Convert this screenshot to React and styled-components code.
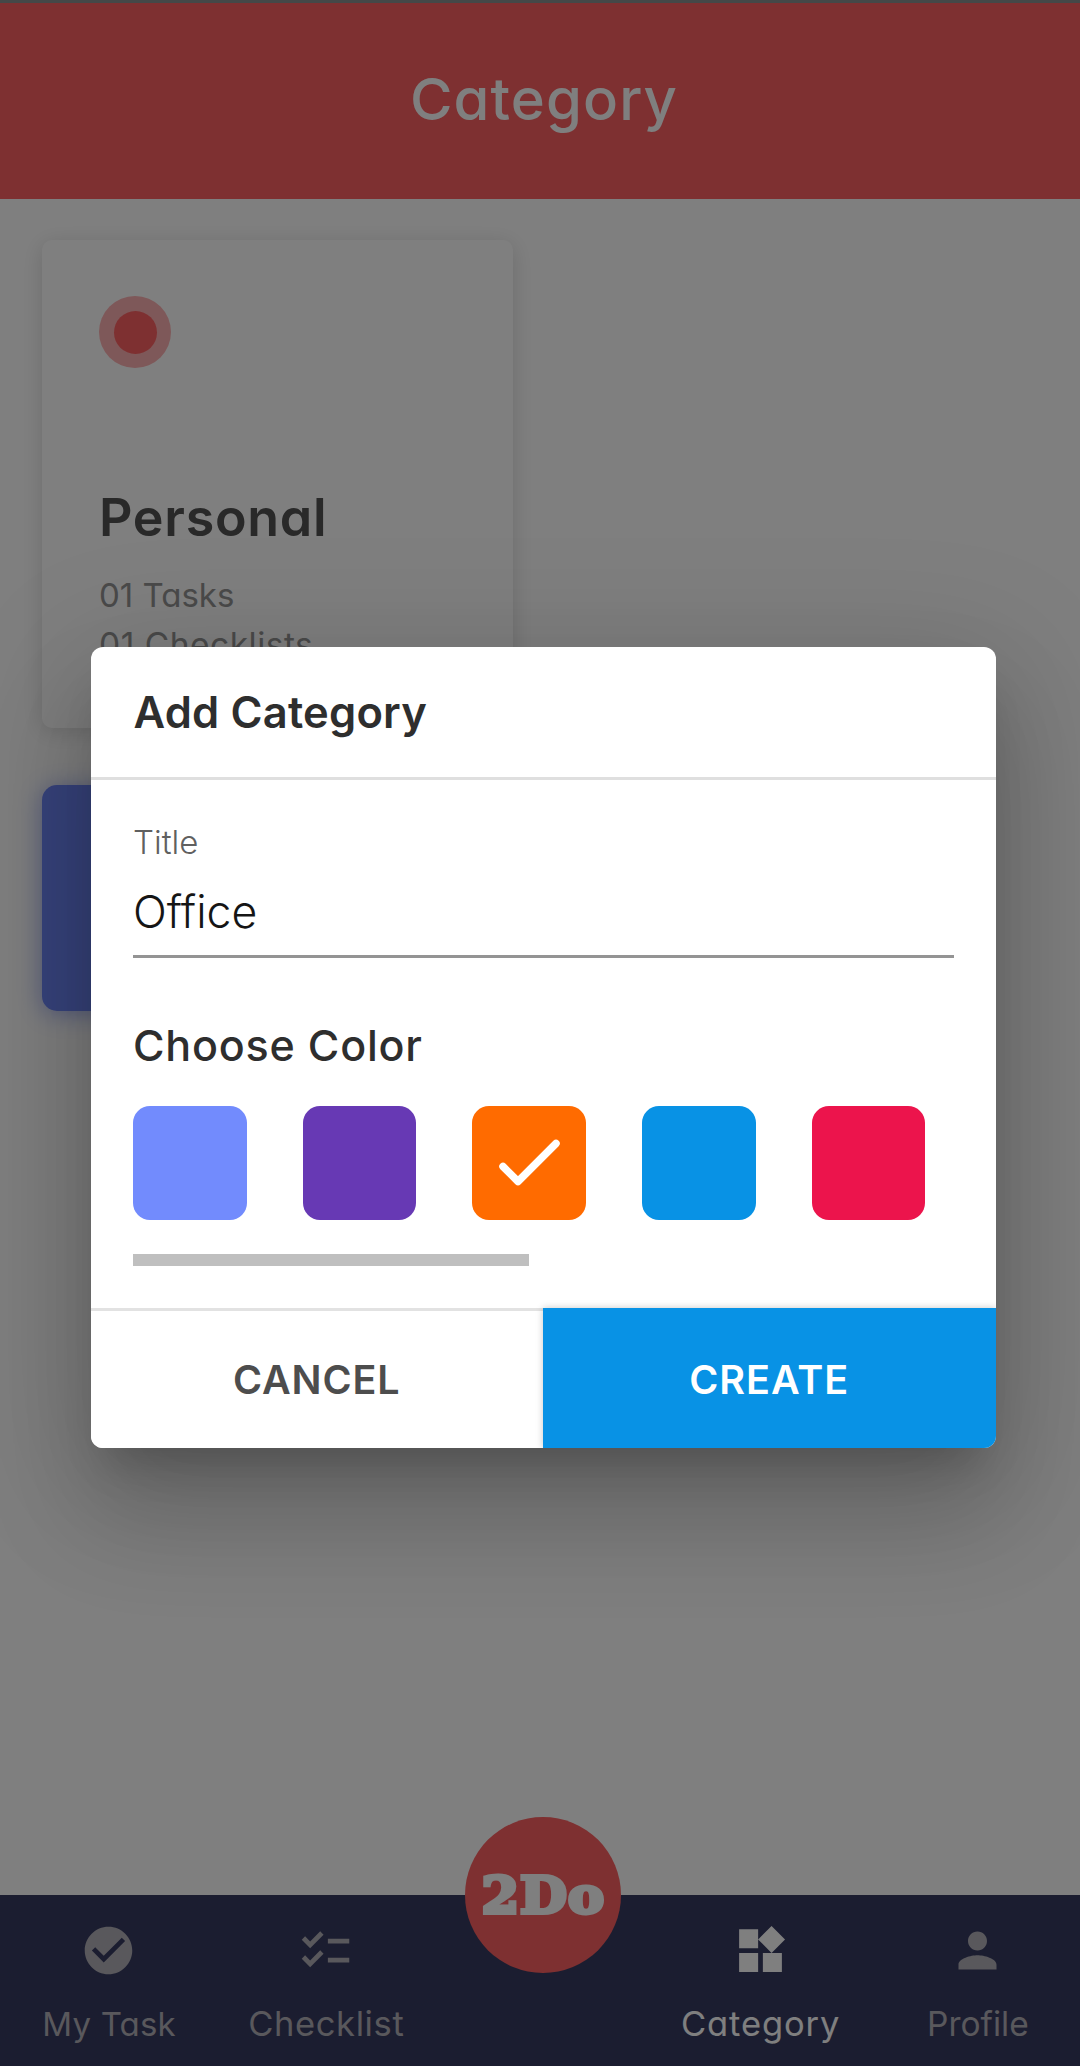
import React from "react";
import styled, { createGlobalStyle } from "styled-components";
import { MdCheckCircle, MdChecklist, MdWidgets, MdPerson } from "react-icons/md";

const GlobalStyle = createGlobalStyle`
  * { box-sizing: border-box; }
  html, body { margin: 0; padding: 0; overflow: hidden; background: #fff; }
  body { font-family: Inter, "Liberation Sans", sans-serif; }
`;

const Viewport = styled.div`
  width: 1080px;
  height: 2066px;
  overflow: hidden;
`;

const Screen = styled.div`
  position: relative;
  display: flex;
  flex-direction: column;
  width: 1086px;
  height: 2066px;
  background: #fff;
`;

/* Rounded, single-storey letter shapes */
const Geometric = styled.span`
  font-feature-settings: "cv11" 1;
  white-space: nowrap;
`;

const StatusStrip = styled.div`
  height: 3px;
  background: #8a9090;
`;

const Header = styled.header`
  display: flex;
  align-items: center;
  justify-content: center;
  height: 196px;
  padding: 0 0 5px 2px;
  background: #fc6062;
`;

const HeaderTitle = styled(Geometric)`
  font-size: 58px;
  font-weight: 500;
  line-height: 80px;
  letter-spacing: 1.1px;
  color: #fff;
`;

const Content = styled.main`
  display: flex;
  flex-direction: column;
  align-items: flex-start;
  flex: 1;
  gap: 57px;
  padding: 41px 42px 0;
`;

const Card = styled.section`
  display: flex;
  flex-direction: column;
  align-items: flex-start;
  width: 471px;
  height: 488px;
  padding: 56px 57px 0 57px;
  border-radius: 10px;
  background: #fff;
  box-shadow: 0 4px 22px rgba(0, 0, 0, 0.15);
`;

const Dot = styled.div`
  display: flex;
  align-items: center;
  justify-content: center;
  width: 72px;
  height: 72px;
  border-radius: 50%;
  background: #fdb0b2;

  &::after {
    content: "";
    width: 43px;
    height: 43px;
    border-radius: 50%;
    background: #fc6062;
  }
`;

const CardTitle = styled(Geometric)`
  margin: 120px 0 22px;
  font-size: 52px;
  font-weight: 620;
  line-height: 60px;
  letter-spacing: 0.7px;
  color: #525252;
`;

const CardLine = styled(Geometric)`
  font-size: ${(p) => p.$size};
  line-height: 50px;
  letter-spacing: ${(p) => p.$spacing};
  color: #949494;
`;

const AddTile = styled.div`
  width: 471px;
  height: 226px;
  border-radius: 15px;
  background: #6f86f8;
  box-shadow: 0 3px 24px rgba(70, 100, 240, 0.5);
`;

const NavBar = styled.nav`
  position: relative;
  display: grid;
  grid-template-columns: repeat(5, 217.2px);
  height: 171px;
  background: #373b61;
`;

const NavItem = styled.div`
  display: flex;
  flex-direction: column;
  align-items: center;
  padding-top: 27px;
  color: ${(p) => (p.$active ? "#ffffff" : "#b2b0b8")};

  svg {
    width: 57px;
    height: 57px;
  }
`;

const NavLabel = styled(Geometric)`
  margin-top: 20px;
  padding-left: 1px;
  font-size: ${(p) => p.$size};
  font-weight: 380;
  line-height: 50px;
  letter-spacing: ${(p) => p.$spacing};
`;

const Fab = styled.div`
  position: absolute;
  left: 465px;
  top: -78px;
  display: flex;
  align-items: center;
  justify-content: center;
  width: 156px;
  height: 156px;
  border-radius: 50%;
  background: #fc6062;
`;

const Logo = styled.span`
  padding-top: 2px;
  font-family: "DejaVu Serif", serif;
  font-size: 50px;
  font-weight: 700;
  line-height: 60px;
  letter-spacing: 1px;
  color: #fff;
  -webkit-text-stroke: 4px #fff;
  transform: scaleX(1.08);
`;

const Overlay = styled.div`
  position: absolute;
  inset: 0;
  display: flex;
  align-items: flex-start;
  justify-content: center;
  padding-top: 647px;
  background: rgba(0, 0, 0, 0.5);
`;

const Dialog = styled.div`
  display: flex;
  flex-direction: column;
  width: 905px;
  height: 801px;
  border-radius: 12px;
  overflow: hidden;
  background: #fff;
  box-shadow: 0 30px 41px -19px rgba(0, 0, 0, 0.2),
    0 66px 105px 8px rgba(0, 0, 0, 0.14),
    0 25px 127px 22px rgba(0, 0, 0, 0.12);
`;

const DialogHeader = styled.div`
  display: flex;
  align-items: center;
  height: 133px;
  padding: 0 43px 1px;
  border-bottom: 3px solid #dfdfdf;
`;

const DialogTitle = styled.span`
  font-size: 43.5px;
  font-weight: 580;
  line-height: 60px;
  letter-spacing: 0.2px;
  white-space: nowrap;
  color: #2e2e2e;
`;

const DialogBody = styled.div`
  display: flex;
  flex-direction: column;
  flex: 1;
  padding: 42px 42px 0 42.5px;
`;

const FieldLabel = styled.label`
  font-size: 33px;
  font-weight: 300;
  line-height: 40px;
  color: #606060;
`;

const FieldValue = styled.div`
  height: 96px;
  font-size: 44.5px;
  font-weight: 300;
  line-height: 100px;
  color: #151515;
  border-bottom: 3px solid #949494;
`;

const SectionTitle = styled(Geometric)`
  margin: 57px 0 31px;
  font-size: 43px;
  font-weight: 500;
  line-height: 60px;
  letter-spacing: 0.8px;
  color: #2e2e2e;
`;

const Swatches = styled.div`
  display: flex;
  gap: 56.2px;
`;

const Swatch = styled.div`
  display: flex;
  align-items: center;
  justify-content: center;
  flex: 0 0 113.5px;
  height: 113.5px;
  border-radius: 17px;
  background: ${(p) => p.$color};
`;

const ScrollThumb = styled.div`
  width: 396px;
  height: 12px;
  margin-top: 34.5px;
  background: #bfbfbf;
`;

const Actions = styled.div`
  display: grid;
  grid-template-columns: 1fr 1fr;
  height: 140px;
`;

const Action = styled.button`
  display: flex;
  align-items: center;
  justify-content: center;
  border: 0;
  padding: 3px 0 0;
  font-family: inherit;
  font-size: 39.5px;
  font-weight: ${(p) => (p.$primary ? 620 : 560)};
  letter-spacing: ${(p) => p.$spacing};
  color: ${(p) => (p.$primary ? "#fff" : "#4d4d4d")};
  background: ${(p) => (p.$primary ? "#0892e5" : "#fff")};
  box-shadow: ${(p) =>
    p.$primary ? "0 0 7px rgba(0, 0, 0, 0.22)" : "inset 0 3px 0 #e2e2e2"};
`;

const colors = ["#728bfd", "#6739b4", "#ff6b00", "#0892e5", "#ec144c"];

const navLeft = [
  { label: "My Task", Icon: MdCheckCircle, size: "33px", spacing: "0.2px" },
  { label: "Checklist", Icon: MdChecklist, size: "34.5px", spacing: "0.6px" },
];
const navRight = [
  { label: "Category", Icon: MdWidgets, size: "34.5px", spacing: "0.9px", active: true },
  { label: "Profile", Icon: MdPerson, size: "33.5px", spacing: "0px" },
];

function NavEntry({ label, Icon, size, spacing, active }) {
  return (
    <NavItem $active={active}>
      <Icon />
      <NavLabel $size={size} $spacing={spacing}>
        {label}
      </NavLabel>
    </NavItem>
  );
}

function CheckMark() {
  return (
    <svg width="64" height="50" viewBox="0 0 64 50" fill="none">
      <path
        d="M6 28.5 L21 43.5 L59 5.5"
        stroke="#fff"
        strokeWidth="7.5"
        strokeLinecap="round"
        strokeLinejoin="round"
      />
    </svg>
  );
}

export default function App() {
  return (
    <Viewport>
      <GlobalStyle />
      <Screen>
        <StatusStrip />
        <Header>
          <HeaderTitle>Category</HeaderTitle>
        </Header>
        <Content>
          <Card>
            <Dot />
            <CardTitle>Personal</CardTitle>
            <CardLine $size="33px" $spacing="0px">
              01 Tasks
            </CardLine>
            <CardLine $size="33.5px" $spacing="0.5px">
              01 Checklists
            </CardLine>
          </Card>
          <AddTile />
        </Content>
        <NavBar>
          {navLeft.map((n) => (
            <NavEntry key={n.label} {...n} />
          ))}
          <div />
          {navRight.map((n) => (
            <NavEntry key={n.label} {...n} />
          ))}
          <Fab>
            <Logo>2Do</Logo>
          </Fab>
        </NavBar>
        <Overlay>
          <Dialog>
            <DialogHeader>
              <DialogTitle>Add Category</DialogTitle>
            </DialogHeader>
            <DialogBody>
              <FieldLabel>Title</FieldLabel>
              <FieldValue>Office</FieldValue>
              <SectionTitle>Choose Color</SectionTitle>
              <Swatches>
                {colors.map((c, i) => (
                  <Swatch key={c} $color={c}>
                    {i === 2 && <CheckMark />}
                  </Swatch>
                ))}
              </Swatches>
              <ScrollThumb />
            </DialogBody>
            <Actions>
              <Action $spacing="0.9px">CANCEL</Action>
              <Action $primary $spacing="1px">
                CREATE
              </Action>
            </Actions>
          </Dialog>
        </Overlay>
      </Screen>
    </Viewport>
  );
}
